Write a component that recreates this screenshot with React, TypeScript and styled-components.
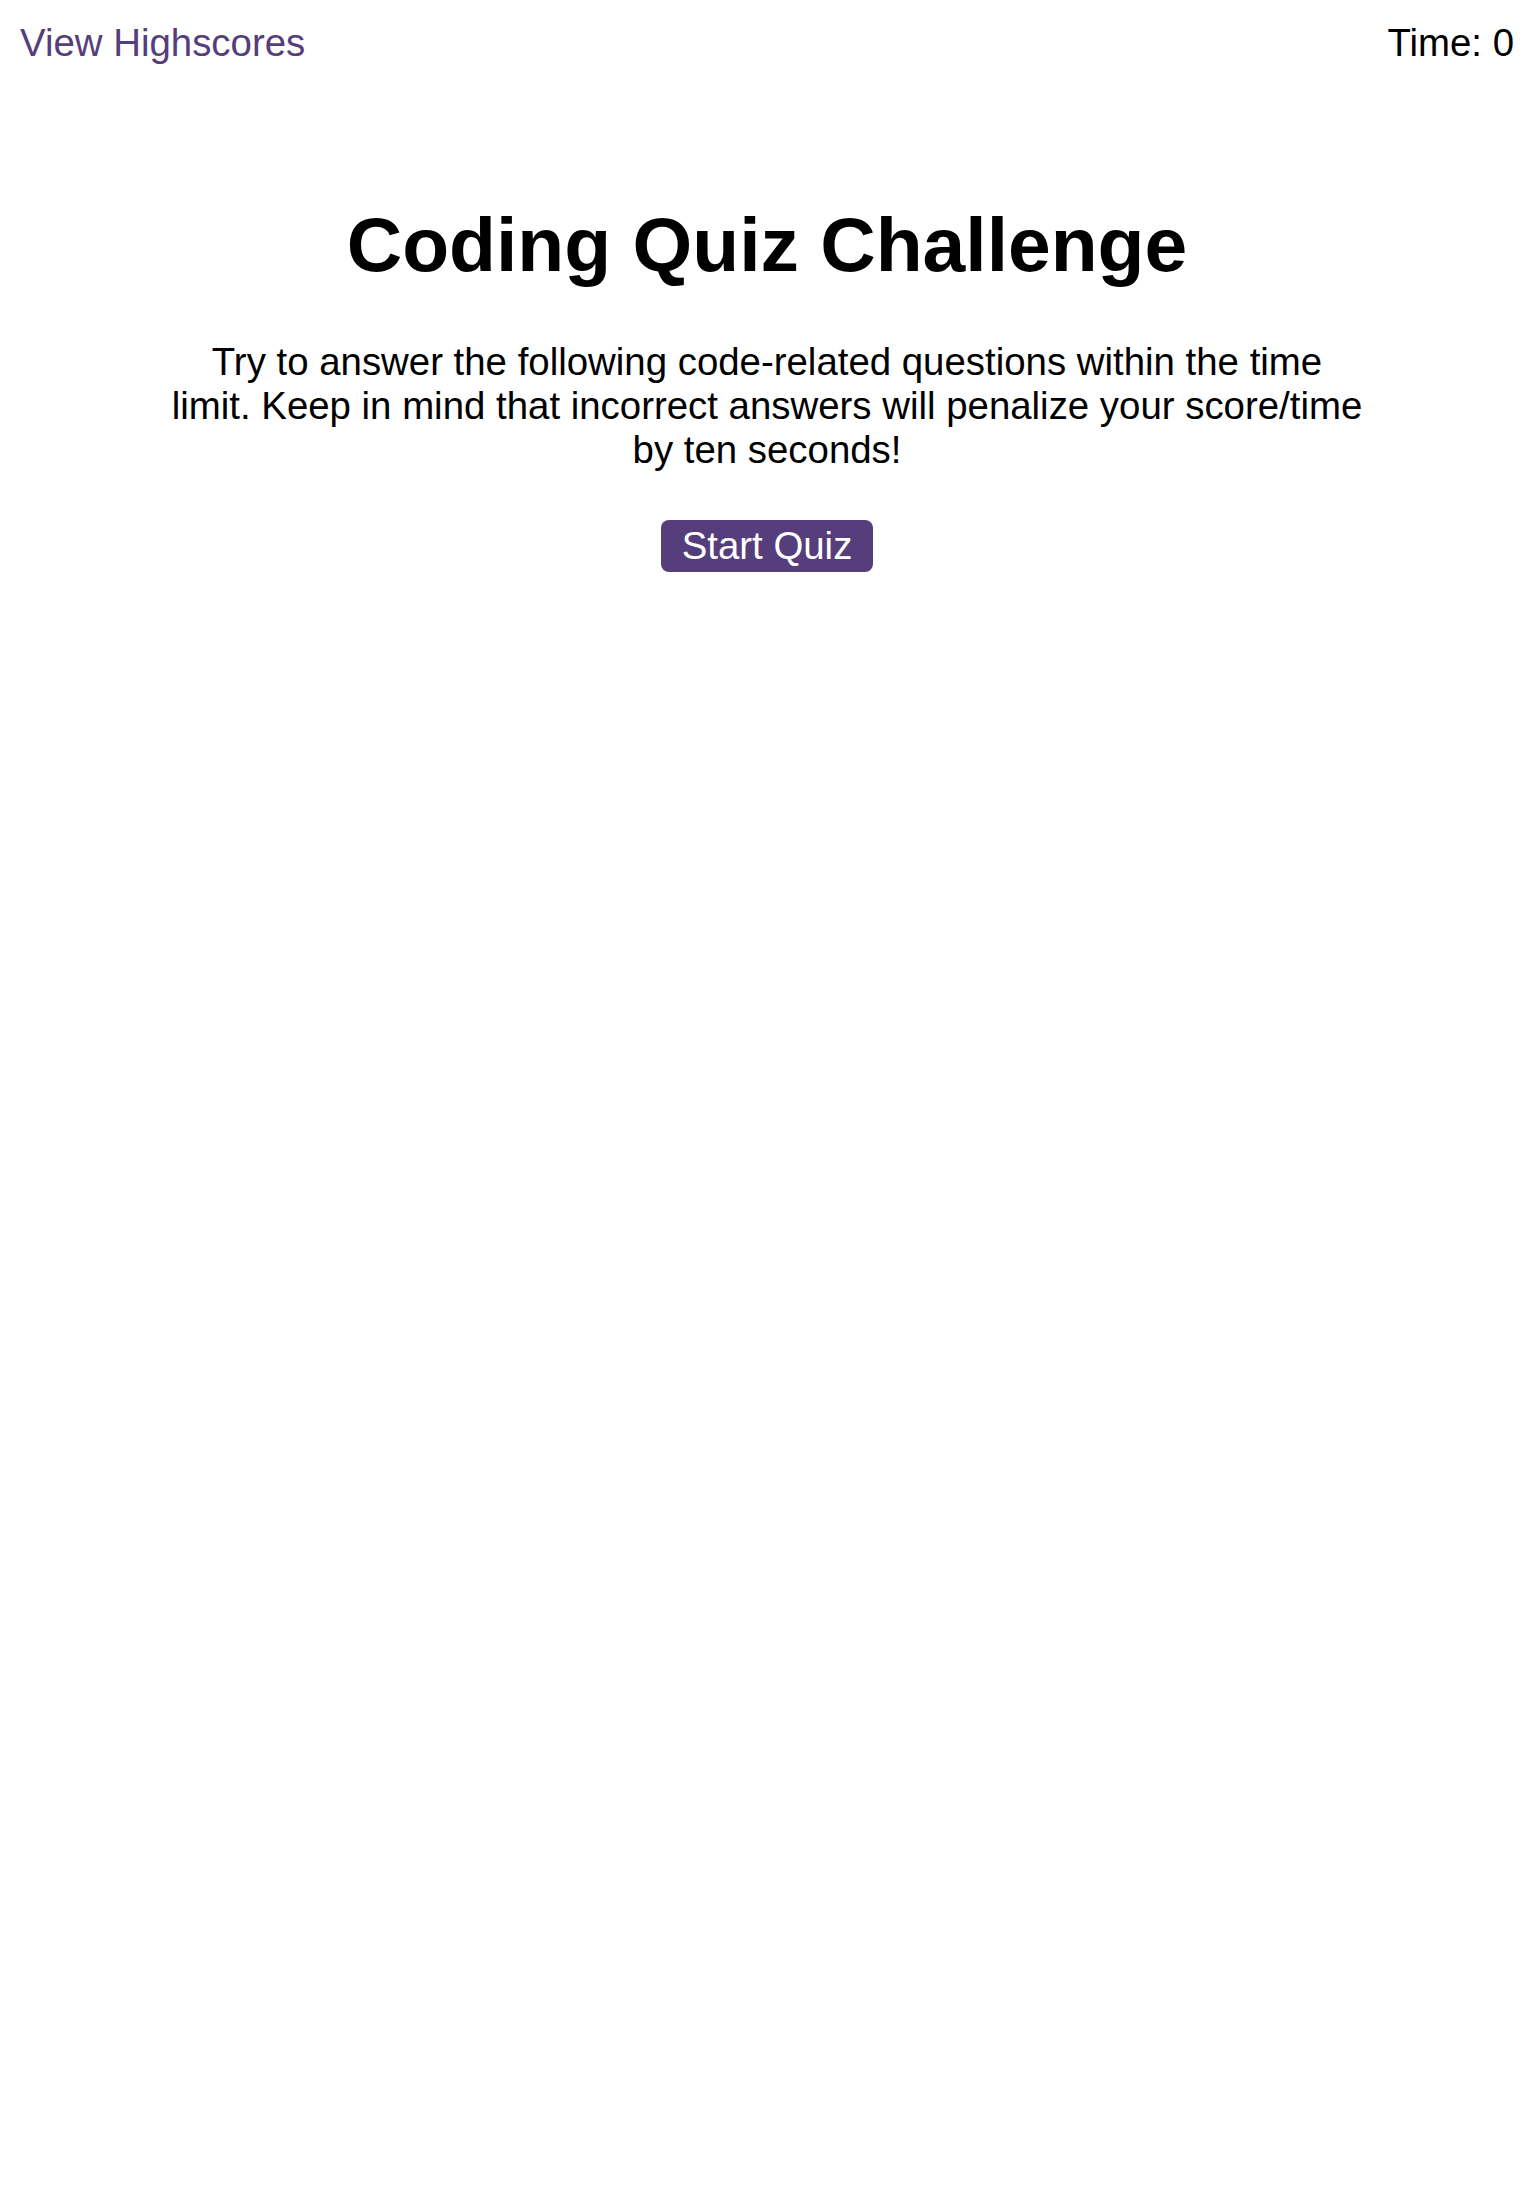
import React from "react";
import styled, { createGlobalStyle } from "styled-components";

const GlobalStyle = createGlobalStyle`
  html, body {
    margin: 0;
    padding: 0;
    background: #ffffff;
  }
  body {
    font-family: "Liberation Sans", Arial, sans-serif;
    color: #000000;
  }
`;

const Header = styled.header`
  display: flex;
  justify-content: space-between;
  align-items: flex-start;
  padding: 21px 20px 0;
  font-size: 38.4px;
  line-height: 44px;
`;

const HighscoreLink = styled.a`
  color: #563d7c;
  text-decoration: none;
  cursor: pointer;
`;

const Timer = styled.div`
  color: #000000;
`;

const Main = styled.main`
  display: flex;
  flex-direction: column;
  align-items: center;
  text-align: center;
  margin-top: 135px;
  padding: 0 20px;
`;

const Title = styled.h1`
  margin: 0;
  font-size: 76.8px;
  font-weight: 700;
  line-height: 88px;
`;

const Intro = styled.p`
  margin: 52px 0 0;
  width: 100%;
  max-width: 1196px;
  font-size: 38.4px;
  line-height: 44px;
`;

const StartButton = styled.button`
  margin-top: 48px;
  padding: 4px 20.6px;
  border: none;
  border-radius: 8px;
  background: #563d7c;
  color: #ffffff;
  font-family: "Liberation Sans", Arial, sans-serif;
  font-size: 38.4px;
  line-height: 44px;
  cursor: pointer;
`;

export default function App() {
  return (
    <>
      <GlobalStyle />
      <Header>
        <HighscoreLink>View Highscores</HighscoreLink>
        <Timer>Time: 0</Timer>
      </Header>
      <Main>
        <Title>Coding Quiz Challenge</Title>
        <Intro>
          Try to answer the following code-related questions within the time
          limit. Keep in mind that incorrect answers will penalize your
          score/time by ten seconds!
        </Intro>
        <StartButton>Start Quiz</StartButton>
      </Main>
    </>
  );
}
